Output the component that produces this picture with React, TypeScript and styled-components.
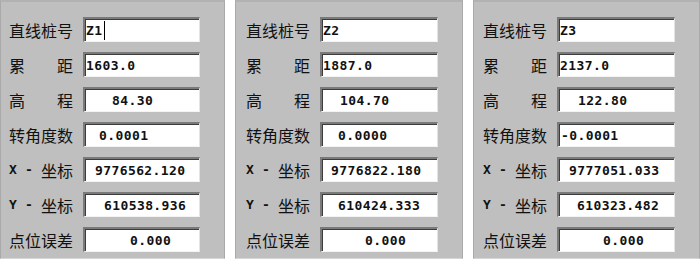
import styled, { createGlobalStyle } from 'styled-components';

const GlobalStyle = createGlobalStyle`
    html, body {
        margin: 0;
        padding: 0;
        background: #ffffff;
    }
`;

const Page = styled.div`
    display: flex;
    gap: 10px;
    width: 700px;
    height: 263px;
    align-items: flex-start;
`;

const Panel = styled.div<{ $width: number; $inset: number }>`
    box-sizing: border-box;
    width: ${(p) => p.$width}px;
    height: 259px;
    background: #bfbfbf;
    border-top: 2px solid #b2b2b2;
    border-left: 1px solid #a9a9a9;
    border-right: 1px solid #a9a9a9;
    border-bottom: 1px solid #d6d6d6;
    padding: 15px 0 0 ${(p) => p.$inset}px;
    display: grid;
    grid-template-columns: 64px ${(p) => p.$width - p.$inset - 64 - 10 - 26}px;
    grid-auto-rows: 25px;
    column-gap: 10px;
    row-gap: 10px;
    align-content: start;
`;

const Label = styled.div`
    display: flex;
    justify-content: space-between;
    align-items: center;
    font-family: 'Noto Sans CJK SC', sans-serif;
    font-size: 16px;
    color: #111;
    white-space: nowrap;
`;

const Axis = styled.span`
    font-family: 'DejaVu Sans Mono', monospace;
    font-weight: bold;
    font-size: 13px;
`;

const Field = styled.div<{ $indent: number }>`
    box-sizing: border-box;
    background: #ffffff;
    border-top: 2px solid #7a7a7a;
    border-left: 2px solid #7a7a7a;
    border-right: 1px solid #e4e4e4;
    border-bottom: 1px solid #f4f4f4;
    box-shadow: inset 1px 1px 0 #3c3c3c;
    display: flex;
    align-items: center;
    padding-left: ${(p) => p.$indent}px;
    font-family: 'DejaVu Sans Mono', monospace;
    font-weight: bold;
    font-size: 13px;
    letter-spacing: 0.4px;
    color: #111;
    white-space: nowrap;
`;

const Caret = styled.span`
    display: inline-block;
    width: 1px;
    height: 19px;
    margin-left: 2px;
    background: #000;
`;

type Row = { value: string; indent: number };

type Station = {
    width: number;
    inset: number;
    rows: Row[];
    caret?: boolean;
};

const stations: Station[] = [
    {
        width: 225,
        inset: 8,
        caret: true,
        rows: [
            { value: 'Z1', indent: 1 },
            { value: '1603.0', indent: 1 },
            { value: '84.30', indent: 27 },
            { value: '0.0001', indent: 14 },
            { value: '9776562.120', indent: 10 },
            { value: '610538.936', indent: 19 },
            { value: '0.000', indent: 45 },
        ],
    },
    {
        width: 228,
        inset: 10,
        rows: [
            { value: 'Z2', indent: 1 },
            { value: '1887.0', indent: 1 },
            { value: '104.70', indent: 18 },
            { value: '0.0000', indent: 16 },
            { value: '9776822.180', indent: 9 },
            { value: '610424.333', indent: 16 },
            { value: '0.000', indent: 43 },
        ],
    },
    {
        width: 227,
        inset: 9,
        rows: [
            { value: 'Z3', indent: 1 },
            { value: '2137.0', indent: 1 },
            { value: '122.80', indent: 19 },
            { value: '-0.0001', indent: 2 },
            { value: '9777051.033', indent: 10 },
            { value: '610323.482', indent: 18 },
            { value: '0.000', indent: 44 },
        ],
    },
];

const labels = [
    ['直线桩号'],
    ['累', '距'],
    ['高', '程'],
    ['转角度数'],
    ['X', '-', '坐标'],
    ['Y', '-', '坐标'],
    ['点位误差'],
];

const renderLabel = (parts: string[]) =>
    parts.map((part, i) =>
        part === 'X' || part === 'Y' || part === '-' ? (
            <Axis key={i}>{part}</Axis>
        ) : (
            <span key={i}>{part}</span>
        ),
    );

export default function App() {
    return (
        <>
            <GlobalStyle />
            <Page>
                {stations.map((station, s) => (
                    <Panel key={s} $width={station.width} $inset={station.inset}>
                        {station.rows.map((row, i) => [
                            <Label key={`l${i}`}>{renderLabel(labels[i])}</Label>,
                            <Field key={`f${i}`} $indent={row.indent}>
                                {row.value}
                                {station.caret && i === 0 && <Caret />}
                            </Field>,
                        ])}
                    </Panel>
                ))}
            </Page>
        </>
    );
}
